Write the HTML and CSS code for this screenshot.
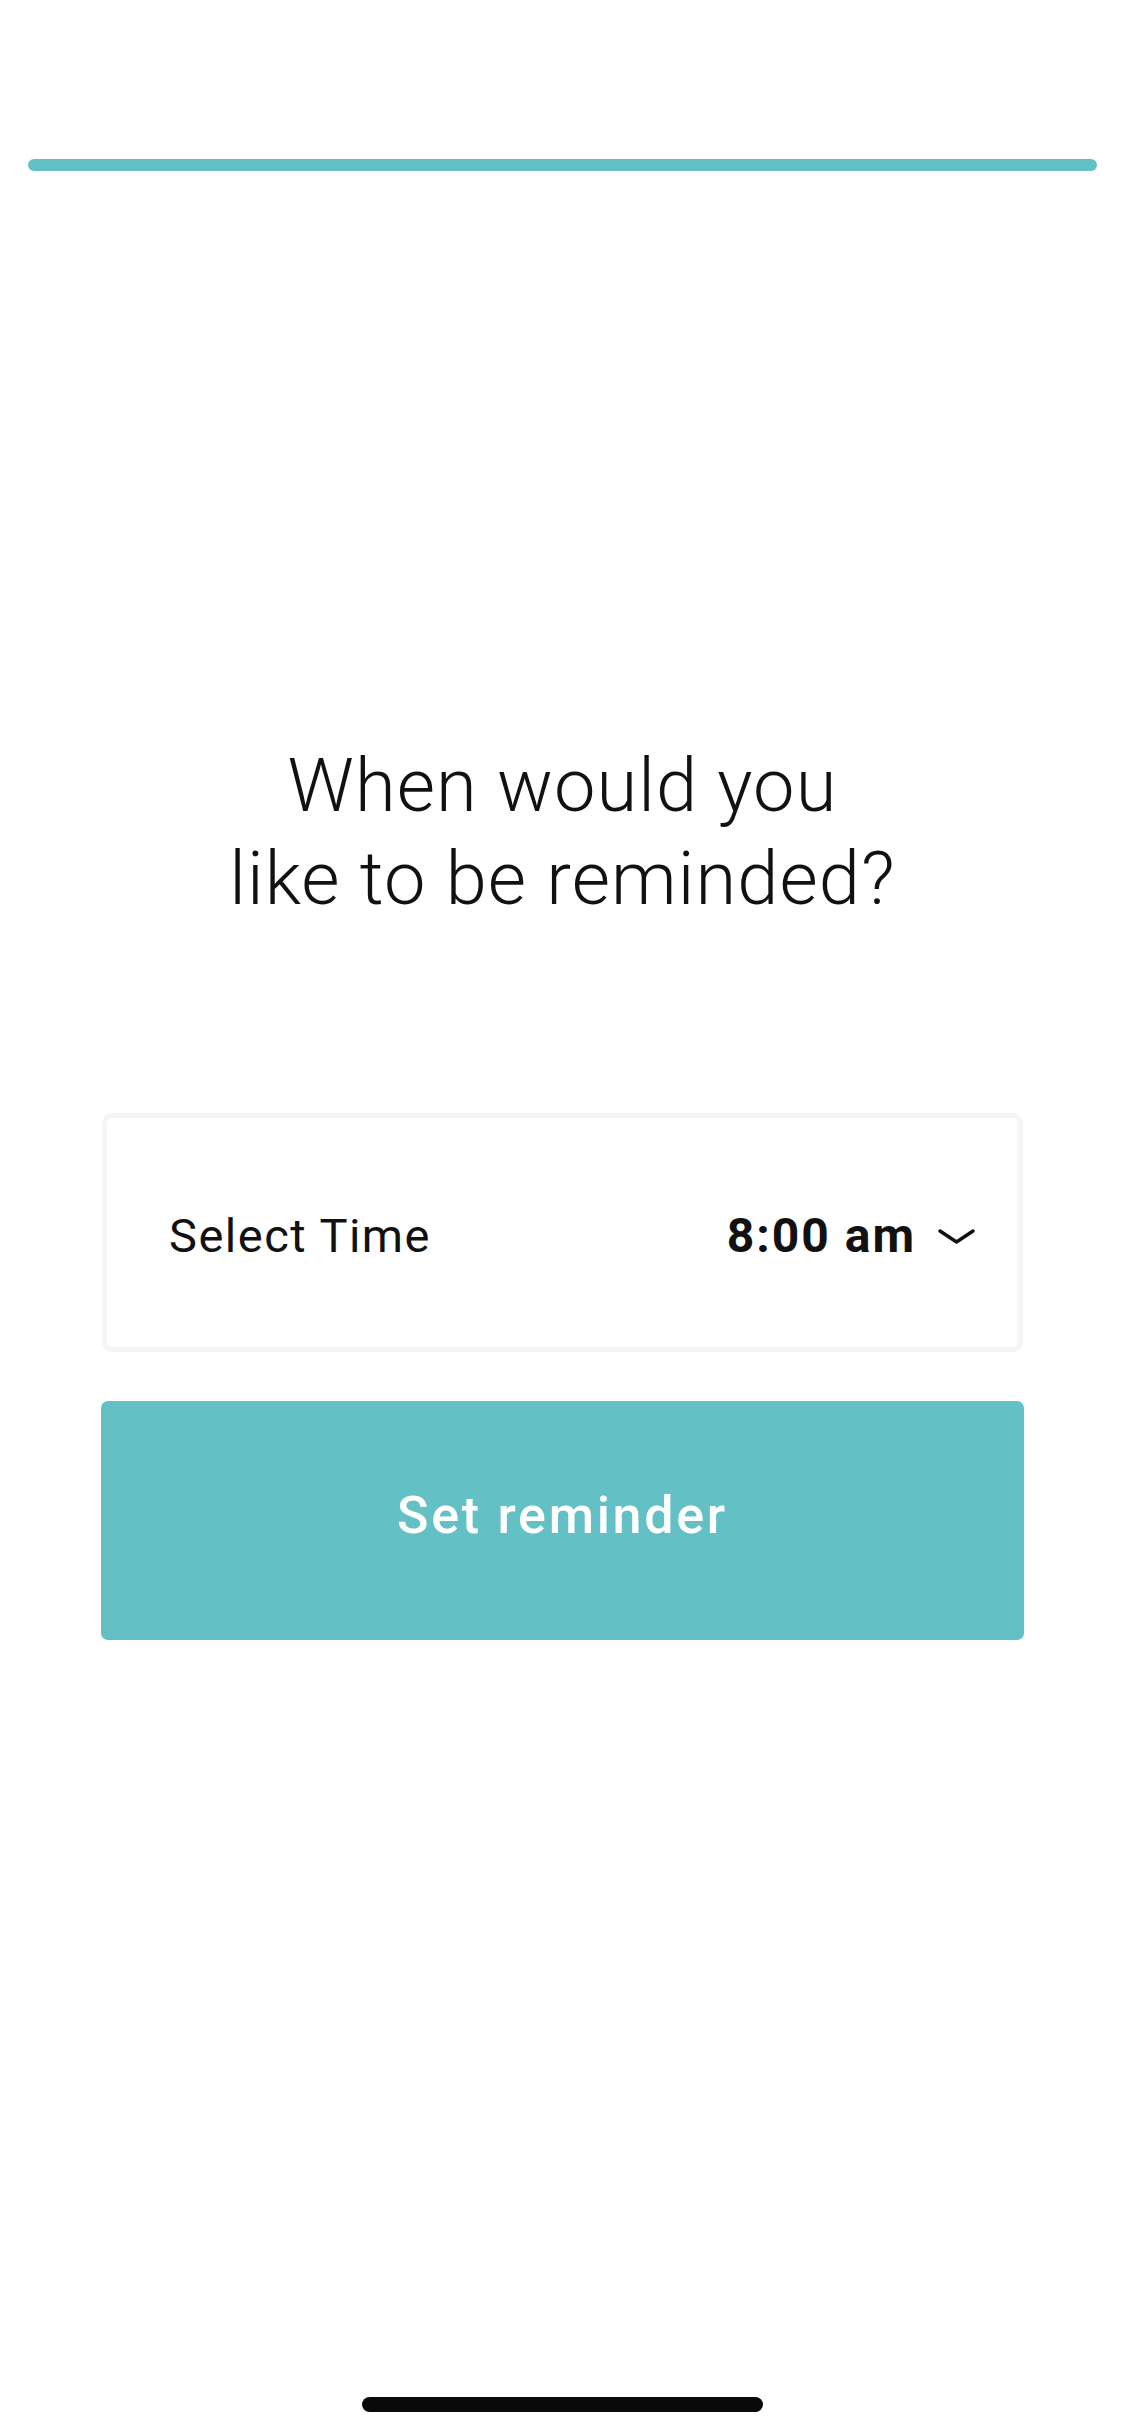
FILE: index.html
```html
<!DOCTYPE html>
<html lang="en">
<head>
<meta charset="utf-8">
<title>Set reminder</title>
<link rel="stylesheet" href="styles.css">
</head>
<body>
<div class="screen">
  <div class="progress"></div>
  <h1 class="title">When would you<br>like to be reminded?</h1>
  <div class="picker">
    <span class="picker-label">Select Time</span>
    <span class="picker-value">8:00 am
      <svg class="chevron" width="37" height="15" viewBox="0 0 37 15" aria-hidden="true"><polyline points="2,2 18.5,13 35,2" fill="none" stroke="#111" stroke-width="3.4" stroke-linecap="round" stroke-linejoin="round"/></svg>
    </span>
  </div>
  <button class="cta">Set reminder</button>
  <div class="home-indicator"></div>
</div>
</body>
</html>
```
FILE: styles.css
```css
* { box-sizing: border-box; }
html, body {
  margin: 0;
  padding: 0;
  background: #ffffff;
}
.screen {
  position: relative;
  width: 1125px;
  height: 2436px;
  display: flex;
  flex-direction: column;
  font-family: Roboto, "Liberation Sans", sans-serif;
  color: #111111;
}
.progress {
  margin: 159px 28px 0;
  height: 12px;
  border-radius: 6px;
  background: #63c1c6;
}
.title {
  margin: 568px 0 0;
  text-align: center;
  font-weight: 300;
  font-size: 74px;
  line-height: 93px;
  letter-spacing: 1.1px;
  color: #111111;
}
.picker {
  margin: 188px 102px 0;
  height: 239px;
  border: 5px solid #f4f5f7;
  border-radius: 10px;
  display: flex;
  align-items: center;
  justify-content: space-between;
  padding: 6px 43px 0 62px;
}
.picker-label {
  font-size: 47px;
  font-weight: 400;
  letter-spacing: 1.5px;
}
.picker-value {
  display: flex;
  align-items: center;
  gap: 22px;
  font-size: 48px;
  font-weight: 700;
  letter-spacing: 2px;
}
.chevron {
  display: block;
  margin-top: 2px;
}
.cta {
  margin: 49px 101px 0;
  height: 239px;
  border: none;
  border-radius: 7px;
  background: #63c1c6;
  color: #ffffff;
  font-family: Roboto, "Liberation Sans", sans-serif;
  font-size: 52px;
  font-weight: 500;
  letter-spacing: 2.7px;
  padding: 0 0 10px;
}
.home-indicator {
  position: absolute;
  left: 362px;
  top: 2397px;
  width: 401px;
  height: 15px;
  border-radius: 8px;
  background: #0a0a0a;
}
```
